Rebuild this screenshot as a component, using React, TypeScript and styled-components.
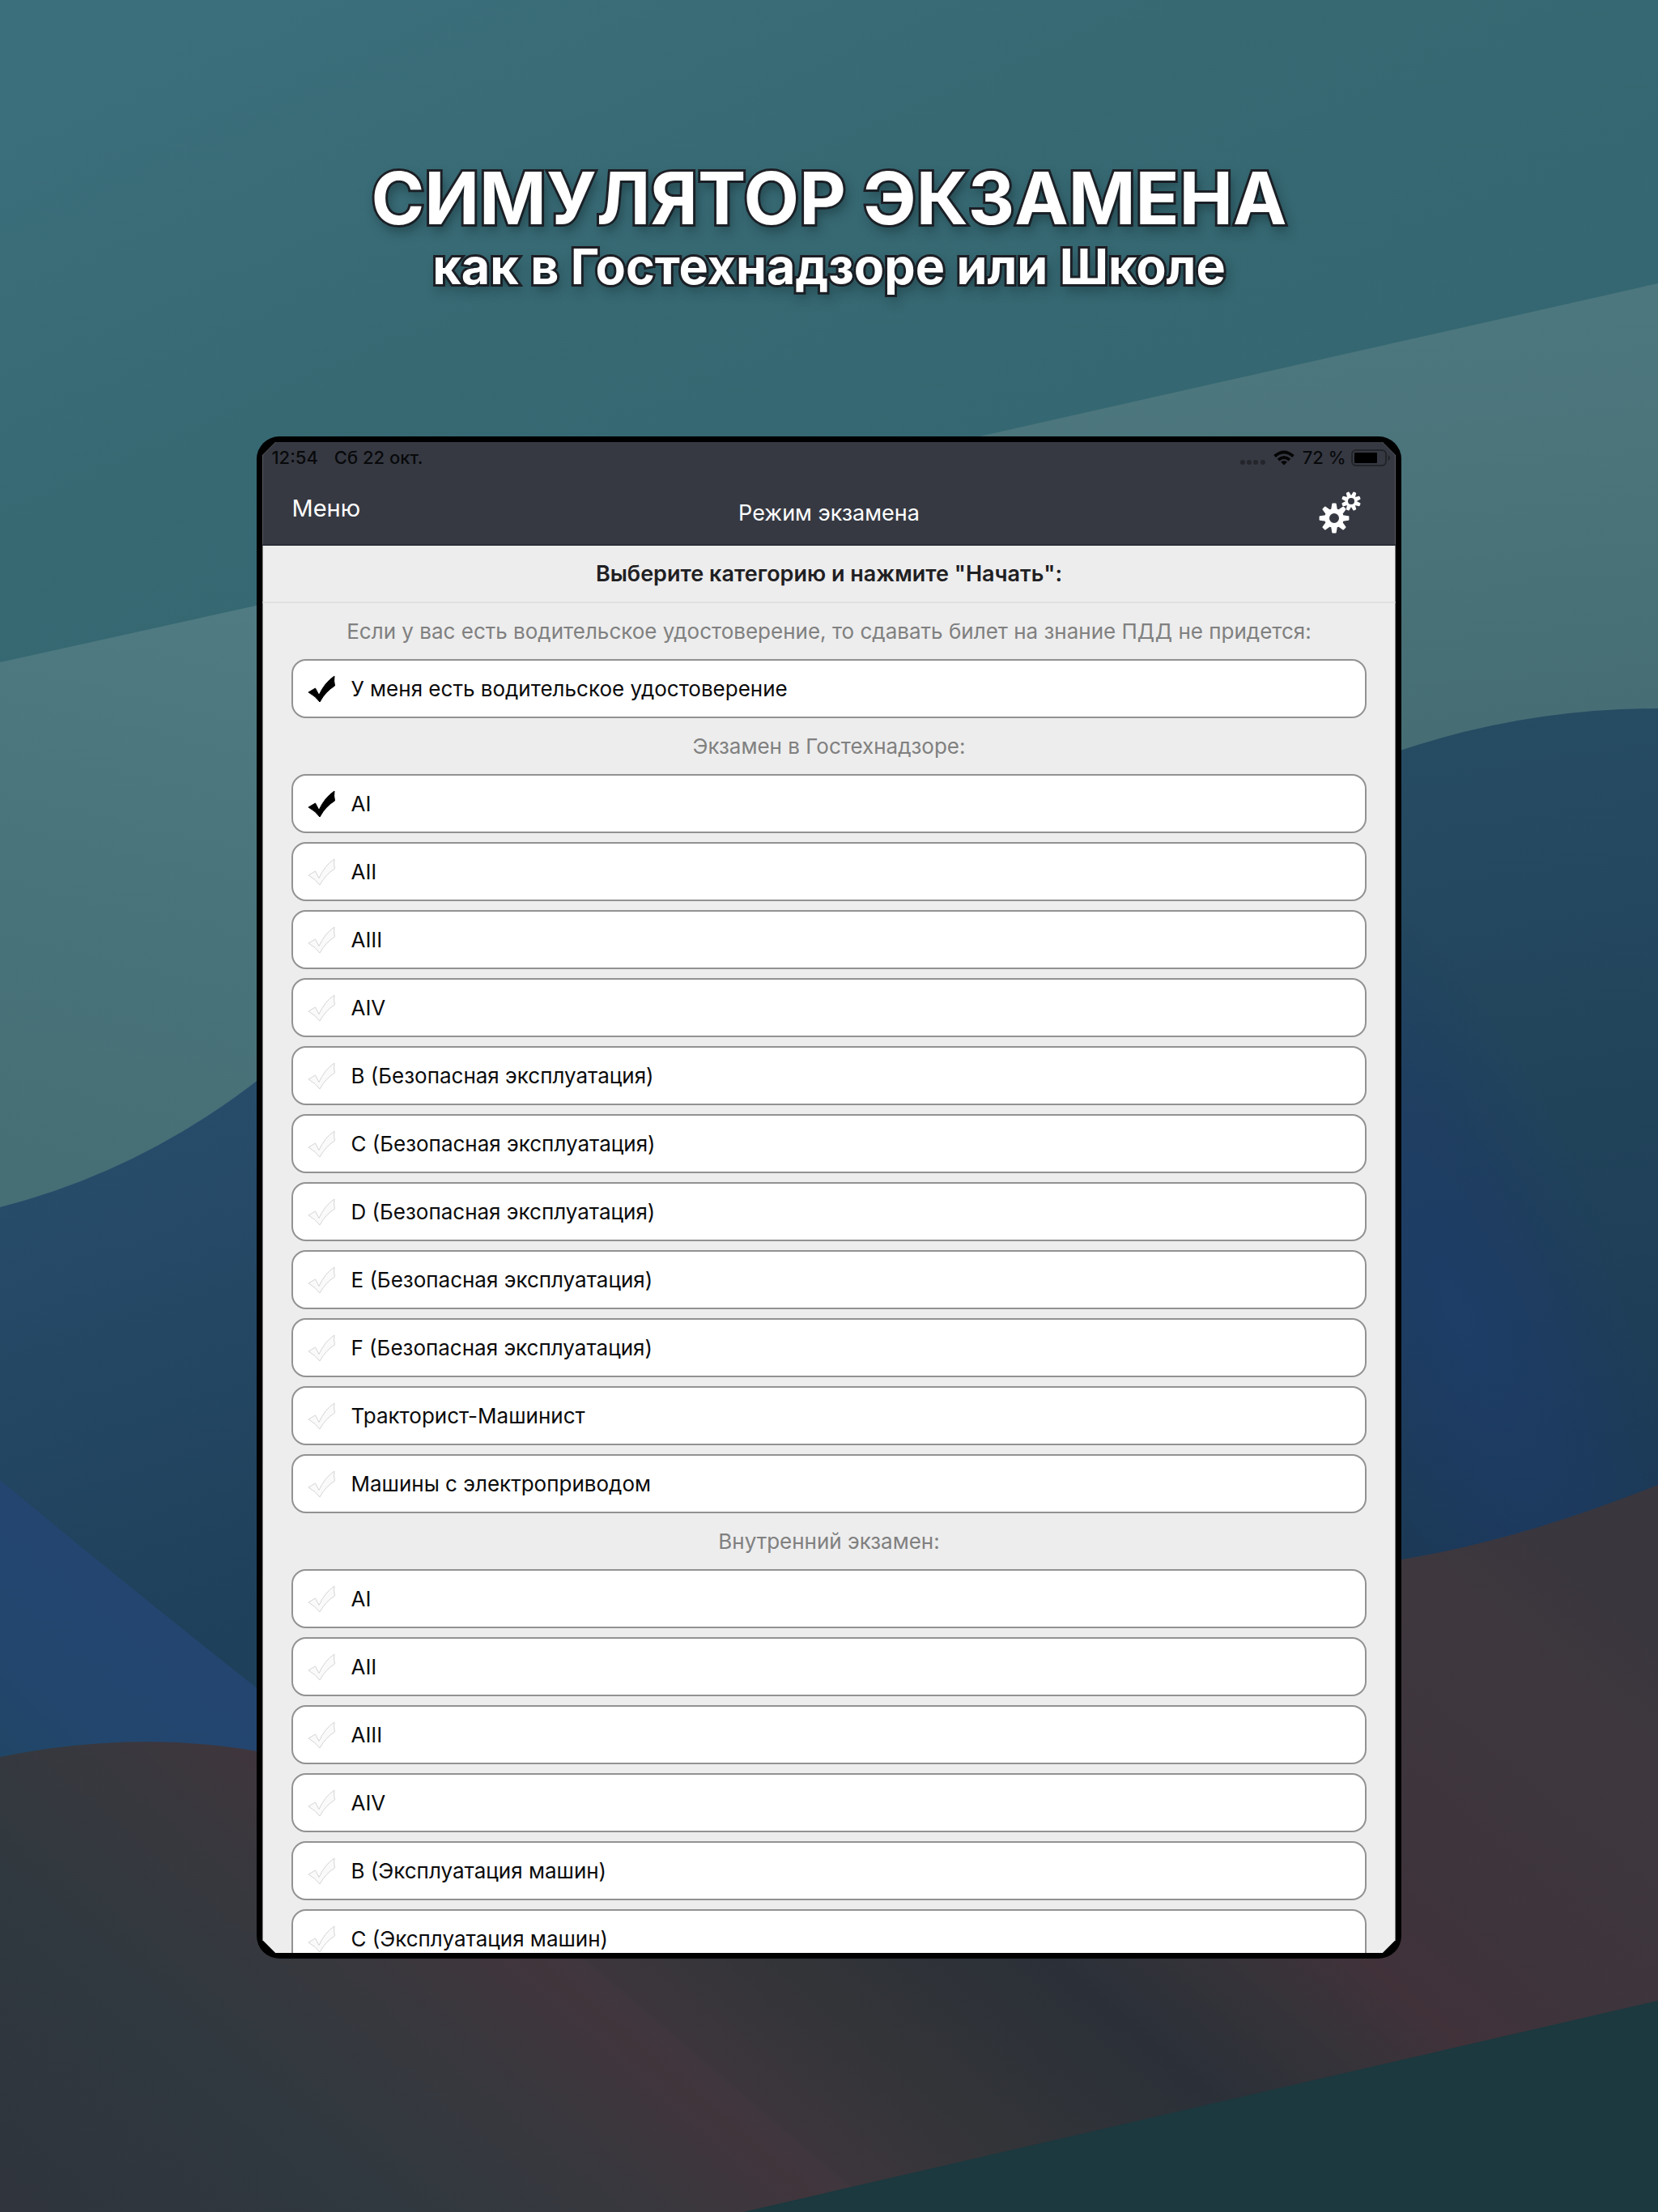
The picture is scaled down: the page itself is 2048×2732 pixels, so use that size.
import React, { useId, useState } from "react";
import styled, { createGlobalStyle } from "styled-components";

const GlobalStyle = createGlobalStyle`
  *, *::before, *::after { box-sizing: border-box; }
  body { margin: 0; background: #2f3640; }
`;

const Page = styled.main`
  position: relative;
  isolation: isolate;
  min-height: 100vh;
  overflow: hidden;
  display: flex;
  flex-direction: column;
  align-items: center;
  padding: 191px 0 312px;
  font-family: Inter, "Noto Sans", sans-serif;
`;

const Backdrop = styled.svg`
  position: absolute;
  inset: 0;
  z-index: -1;
  width: 100%;
  height: 100%;
`;

const Hero = styled.header`
  text-align: center;
  color: #fff;
  font-weight: 700;
  paint-order: stroke fill;
  -webkit-text-stroke: 6px #1f2026;
  text-shadow: 4px 8px 14px rgba(15, 35, 42, 0.5);
  margin-bottom: 180px;
`;

const HeroTitle = styled.h1`
  margin: 0;
  font-size: 89px;
  line-height: 108px;
  font-weight: 700;
`;

const HeroSubtitle = styled.p`
  margin: 0;
  font-size: 61px;
  line-height: 60px;
`;

const Device = styled.section`
  flex: none;
  width: 69%;
  min-height: 0;
  aspect-ratio: 1413 / 1880;
  padding: 7px;
  border-radius: 28px;
  background: #000;
  display: flex;
`;

const Screen = styled.div`
  flex: 1;
  min-width: 0;
  background: #ededed;
  overflow: hidden;
  display: flex;
  flex-direction: column;
  clip-path: polygon(
    16px 0,
    calc(100% - 16px) 0,
    100% 16px,
    100% calc(100% - 16px),
    calc(100% - 16px) 100%,
    16px 100%,
    0 calc(100% - 16px),
    0 16px
  );
`;

const TopBar = styled.div`
  flex: none;
  background: #363942;
  border-bottom: 2px solid #2a2e38;
`;

const StatusBar = styled.div`
  height: 38px;
  display: flex;
  align-items: center;
  justify-content: space-between;
  padding: 0 6px 0 11px;
  color: #08090b;
  font-size: 22px;
  font-weight: 500;
`;

const StatusGroup = styled.div<{ $gap: number }>`
  display: flex;
  align-items: center;
  gap: ${(p) => p.$gap}px;
`;

const NavBar = styled.nav`
  height: 88px;
  display: grid;
  grid-template-columns: 1fr auto 1fr;
  align-items: center;
  padding: 0 36px;
  color: #fff;
`;

const MenuButton = styled.button`
  justify-self: start;
  border: 0;
  padding: 0;
  background: none;
  color: inherit;
  font: inherit;
  font-size: 29px;
  line-height: 36px;
`;

const NavTitle = styled.h2`
  margin: 0;
  padding-top: 12px;
  font-size: 27px;
  line-height: 32px;
  font-weight: 400;
`;

const SettingsButton = styled.button`
  justify-self: end;
  display: flex;
  border: 0;
  padding: 10px 7px 0 0;
  background: none;
  color: inherit;
`;

const Prompt = styled.h3`
  flex: none;
  margin: 0;
  height: 71px;
  display: flex;
  align-items: center;
  justify-content: center;
  border-bottom: 2px solid #e0e0e0;
  color: #1f2023;
  font-size: 27px;
  line-height: 32px;
  font-weight: 600;
`;

const Form = styled.form`
  flex: 1;
  min-height: 0;
  overflow: hidden;
  padding: 0 36px;
`;

const Group = styled.fieldset`
  margin: 0;
  padding: 0;
  border: 0;
  min-width: 0;
`;

const GroupLabel = styled.legend`
  width: 100%;
  height: 69px;
  padding: 0;
  color: #808080;
  font-size: 26px;
  line-height: 69px;
  text-align: center;
`;

const Rows = styled.div`
  display: flex;
  flex-direction: column;
  gap: 11px;
`;

const Row = styled.label`
  position: relative;
  height: 73px;
  display: flex;
  align-items: center;
  gap: 19px;
  padding: 0 18px;
  border: 2px solid #929292;
  border-radius: 18px;
  background: #fff;
  color: #0b0b0c;
  font-size: 26px;
  line-height: 32px;
`;

const HiddenInput = styled.input`
  position: absolute;
  opacity: 0;
  width: 1px;
  height: 1px;
  margin: 0;
`;

const CheckMark = styled.svg<{ $on: boolean }>`
  flex: none;
  width: 34px;
  height: 34px;
  fill: ${(p) => (p.$on ? "#000" : "#fafafa")};
  stroke: ${(p) => (p.$on ? "#000" : "#d4d4d4")};
  stroke-width: 1;
`;

function Scenery() {
  return (
    <Backdrop viewBox="0 0 2048 2732" preserveAspectRatio="none" aria-hidden="true">
      <defs>
        <linearGradient id="sky" gradientUnits="userSpaceOnUse" x1="300" y1="0" x2="700" y2="900">
          <stop offset="0" stopColor="#3b6f7b" />
          <stop offset="0.5" stopColor="#376973" />
          <stop offset="1" stopColor="#346771" />
        </linearGradient>
        <linearGradient id="mist" gradientUnits="userSpaceOnUse" x1="300" y1="750" x2="140" y2="1450">
          <stop offset="0" stopColor="#507b83" />
          <stop offset="0.5" stopColor="#49747b" />
          <stop offset="1" stopColor="#466e75" />
        </linearGradient>
        <linearGradient id="mistRight" gradientUnits="userSpaceOnUse" x1="1850" y1="400" x2="1900" y2="900">
          <stop offset="0" stopColor="#4d777e" />
          <stop offset="1" stopColor="#466d74" />
        </linearGradient>
        <linearGradient id="sea" gradientUnits="userSpaceOnUse" x1="0" y1="1450" x2="200" y2="2050">
          <stop offset="0" stopColor="#274c6a" />
          <stop offset="1" stopColor="#1f405a" />
        </linearGradient>
        <linearGradient id="seaRight" gradientUnits="userSpaceOnUse" x1="1820" y1="880" x2="1980" y2="1900">
          <stop offset="0" stopColor="#264c63" />
          <stop offset="0.5" stopColor="#21435a" />
          <stop offset="1" stopColor="#1b3954" />
        </linearGradient>
        <radialGradient
          id="seaGlow"
          gradientUnits="userSpaceOnUse"
          cx="0"
          cy="0"
          r="1"
          gradientTransform="translate(1800 1620) rotate(68) scale(600 210)"
        >
          <stop offset="0" stopColor="#1e3d6c" stopOpacity="0.8" />
          <stop offset="0.5" stopColor="#1d3a67" stopOpacity="0.5" />
          <stop offset="1" stopColor="#1d3a67" stopOpacity="0" />
        </radialGradient>
        <linearGradient id="wave" gradientUnits="userSpaceOnUse" x1="200" y1="1980" x2="20" y2="2200">
          <stop offset="0" stopColor="#234570" />
          <stop offset="0.5" stopColor="#23466f" />
          <stop offset="1" stopColor="#204666" />
        </linearGradient>
        <linearGradient id="ground" gradientUnits="userSpaceOnUse" x1="0" y1="2732" x2="1235" y2="1288">
          <stop offset="0" stopColor="#2f343d" />
          <stop offset="0.17" stopColor="#30393f" />
          <stop offset="0.27" stopColor="#38383e" />
          <stop offset="0.35" stopColor="#41353c" />
          <stop offset="0.37" stopColor="#40373e" />
          <stop offset="0.373" stopColor="#3c363c" />
          <stop offset="0.46" stopColor="#323438" />
          <stop offset="0.57" stopColor="#2b3038" />
          <stop offset="0.64" stopColor="#353339" />
          <stop offset="0.7" stopColor="#41323a" />
          <stop offset="0.78" stopColor="#3d343c" />
          <stop offset="0.9" stopColor="#3f373e" />
          <stop offset="1" stopColor="#39363d" />
        </linearGradient>
      </defs>
      <rect width="2048" height="2732" fill="url(#sky)" />
      <path d="M1210 539L2048 350V900L1700 1000H1200Z" fill="url(#mistRight)" />
      <path d="M0 818L330 745V1400L0 1500Z" fill="url(#mist)" />
      <path d="M0 1491Q180 1445 330 1325V2200H0Z" fill="url(#sea)" />
      <path d="M1720 930Q1880 875 2048 875V2000H1720Z" fill="url(#seaRight)" />
      <path d="M1720 930Q1880 875 2048 875V2000H1720Z" fill="url(#seaGlow)" />
      <path d="M0 1828Q165 1965 330 2095V2200H0Z" fill="url(#wave)" />
      <path d="M0 2170Q170 2135 330 2165L1720 1928Q1870 1905 2048 1834V2732H0Z" fill="url(#ground)" />
      <path d="M918 2732L2048 2471V2732Z" fill="#1b393f" />
    </Backdrop>
  );
}

function gearPath(cx: number, cy: number, outer: number, body: number, hole: number, phase: number) {
  const point = (radius: number, angle: number) =>
    `${(cx + radius * Math.sin(angle)).toFixed(2)} ${(cy - radius * Math.cos(angle)).toFixed(2)}`;
  const step = Math.PI / 4;
  let d = "";
  for (let i = 0; i < 8; i++) {
    const a = i * step + phase;
    d += `${i ? "L" : "M"}${point(body, a - 0.26)}L${point(outer, a - 0.1)}L${point(outer, a + 0.1)}L${point(body, a + 0.26)}`;
  }
  return `${d}ZM${cx - hole} ${cy}a${hole} ${hole} 0 1 0 ${hole * 2} 0a${hole} ${hole} 0 1 0 ${-hole * 2} 0Z`;
}

function Gears() {
  return (
    <svg width="52" height="52" viewBox="0 0 52 52" aria-hidden="true">
      <g fill="#fff" fillRule="evenodd" stroke="#fff" strokeWidth="2" strokeLinejoin="round">
        <path d={gearPath(19, 33, 17.5, 11, 7, 0)} />
        <path d={gearPath(40, 12, 11, 6.5, 5, Math.PI / 8)} />
      </g>
    </svg>
  );
}

function StatusIcons() {
  return (
    <>
      <svg width="31" height="18" viewBox="0 0 31 18" aria-hidden="true">
        {[3, 11, 19, 28].map((x) => (
          <circle key={x} cx={x} cy="15" r="3" fill="#24262c" />
        ))}
      </svg>
      <svg width="26" height="19" viewBox="0 0 26 19" aria-hidden="true" fill="none" stroke="#050506" strokeWidth="4">
        <path d="M1.5 7.5Q13 -2.5 24.5 7.5" />
        <path d="M6 12Q13 6 20 12" />
        <path d="M13 18.5L9 14.5Q13 11.5 17 14.5Z" fill="#050506" stroke="none" />
      </svg>
    </>
  );
}

function Battery() {
  return (
    <svg width="49" height="21" viewBox="0 0 49 21" aria-hidden="true">
      <rect x="1" y="1" width="42" height="19" rx="5" fill="none" stroke="#222429" strokeWidth="2" />
      <rect x="4" y="4" width="28" height="13" rx="1" fill="#000" />
      <path d="M45.5 7Q48 8 48 10.5T45.5 14Z" fill="#222429" />
    </svg>
  );
}

type OptionProps = {
  label: string;
  type: "checkbox" | "radio";
  checked: boolean;
  name: string;
  onSelect: () => void;
};

function Option({ label, type, checked, name, onSelect }: OptionProps) {
  const id = useId();
  return (
    <Row htmlFor={id}>
      <HiddenInput id={id} type={type} name={name} checked={checked} onChange={onSelect} />
      <CheckMark $on={checked} viewBox="0 0 34 34" aria-hidden="true">
        <path d="M1 21L9.5 16L14 24.5Q21 9 33 1Q32 7 33.5 13Q22 20 15 33Q10 26 1 21Z" />
      </CheckMark>
      <span>{label}</span>
    </Row>
  );
}

const groups = [
  {
    title: "Экзамен в Гостехнадзоре:",
    options: [
      "AI",
      "AII",
      "AIII",
      "AIV",
      "B (Безопасная эксплуатация)",
      "C (Безопасная эксплуатация)",
      "D (Безопасная эксплуатация)",
      "E (Безопасная эксплуатация)",
      "F (Безопасная эксплуатация)",
      "Тракторист-Машинист",
      "Машины с электроприводом",
    ],
  },
  {
    title: "Внутренний экзамен:",
    options: ["AI", "AII", "AIII", "AIV", "B (Эксплуатация машин)", "C (Эксплуатация машин)"],
  },
];

export default function App() {
  const [licensed, setLicensed] = useState(true);
  const [selected, setSelected] = useState("0-0");

  return (
    <Page>
      <GlobalStyle />
      <Scenery />
      <Hero>
        <HeroTitle>СИМУЛЯТОР ЭКЗАМЕНА</HeroTitle>
        <HeroSubtitle>как в Гостехнадзоре или Школе</HeroSubtitle>
      </Hero>
      <Device>
        <Screen>
          <TopBar>
            <StatusBar>
              <StatusGroup $gap={20}>
                <span>12:54</span>
                <span>Сб 22 окт.</span>
              </StatusGroup>
              <StatusGroup $gap={10}>
                <StatusIcons />
                <StatusGroup $gap={6}>
                  <span>72 %</span>
                  <Battery />
                </StatusGroup>
              </StatusGroup>
            </StatusBar>
            <NavBar>
              <MenuButton type="button">Меню</MenuButton>
              <NavTitle>Режим экзамена</NavTitle>
              <SettingsButton type="button" aria-label="Настройки">
                <Gears />
              </SettingsButton>
            </NavBar>
          </TopBar>
          <Prompt>Выберите категорию и нажмите "Начать":</Prompt>
          <Form>
            <Group>
              <GroupLabel>
                Если у вас есть водительское удостоверение, то сдавать билет на знание ПДД не придется:
              </GroupLabel>
              <Rows>
                <Option
                  label="У меня есть водительское удостоверение"
                  type="checkbox"
                  name="license"
                  checked={licensed}
                  onSelect={() => setLicensed(!licensed)}
                />
              </Rows>
            </Group>
            {groups.map((group, g) => (
              <Group key={group.title}>
                <GroupLabel>{group.title}</GroupLabel>
                <Rows>
                  {group.options.map((label, i) => (
                    <Option
                      key={label}
                      label={label}
                      type="radio"
                      name="category"
                      checked={selected === `${g}-${i}`}
                      onSelect={() => setSelected(`${g}-${i}`)}
                    />
                  ))}
                </Rows>
              </Group>
            ))}
          </Form>
        </Screen>
      </Device>
    </Page>
  );
}
